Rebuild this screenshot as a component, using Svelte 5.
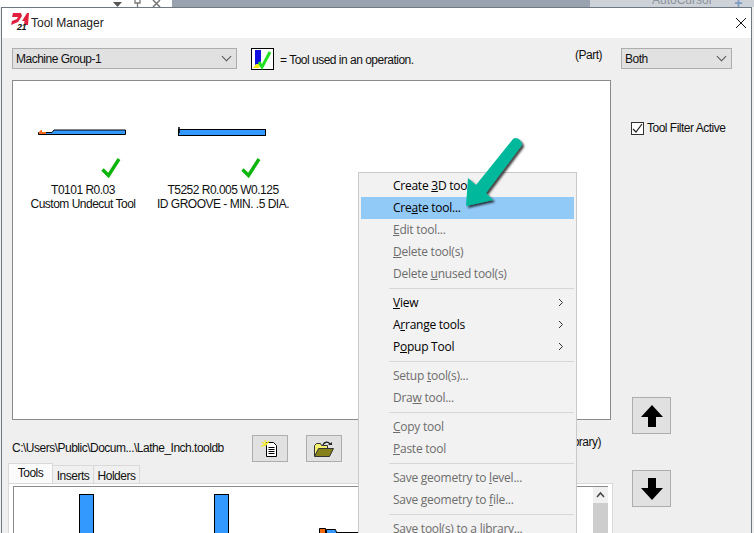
<script>
	const usedTools = [
		{ id: 'T0101 R0.03', name: 'Custom Undecut Tool', kind: 'undercut' },
		{ id: 'T5252 R0.005 W0.125', name: 'ID GROOVE - MIN. .5 DIA.', kind: 'groove' }
	];

	const menu = [
		[
			{ before: 'Create ', key: '3', after: 'D tool...', on: true },
			{ before: 'Cre', key: 'a', after: 'te tool...', on: true, hot: true },
			{ before: '', key: 'E', after: 'dit tool...' },
			{ before: '', key: 'D', after: 'elete tool(s)' },
			{ before: 'Delete ', key: 'u', after: 'nused tool(s)' }
		],
		[
			{ before: '', key: 'V', after: 'iew', on: true, sub: true },
			{ before: 'A', key: 'r', after: 'range tools', on: true, sub: true },
			{ before: 'P', key: 'o', after: 'pup Tool', on: true, sub: true }
		],
		[
			{ before: 'Setup ', key: 't', after: 'ool(s)...' },
			{ before: 'Dra', key: 'w', after: ' tool...' }
		],
		[
			{ before: '', key: 'C', after: 'opy tool' },
			{ before: '', key: 'P', after: 'aste tool' }
		],
		[
			{ before: 'Save geometry to ', key: 'l', after: 'evel...' },
			{ before: 'Save geometry to ', key: 'f', after: 'ile...' }
		],
		[{ before: 'Save tool(s) to a library...', key: '', after: '' }]
	];
</script>

<div class="screen">
	<div class="backdrop">
		<div class="desk">
			<svg class="desk-icons" width="48" height="7" viewBox="0 0 48 7">
				<path d="M0 2h9L4.500 7z" fill="#555" />
				<path d="M22 0v3h5V0M24.500 3v4" fill="none" stroke="#777" stroke-width="1.300" />
				<path d="M40 0l7 7M47 0l-7 7" stroke="#777" stroke-width="1.500" />
			</svg>
		</div>
		<div class="app-dark"></div>
		<div class="app-light">
			<span class="cursor-name">AutoCursor</span>
			<span class="plus">+</span>
		</div>
	</div>

	<div class="window">
		<header class="title">
			<svg class="logo" width="18" height="20" viewBox="0 0 18 20">
				<path d="M2 0h8l1 3-4 6-7 3 1-4 5-2 1-2H1zM11 8l5-8h2l-1 12h-4l.5-4z" fill="#e0203c" />
			</svg>
			<span class="logo-num">21</span>
			<span>Tool Manager</span>
			<svg class="close" width="12" height="12" viewBox="0 0 12 12">
				<path d="M1 1l10 10M11 1L1 11" stroke="#111" stroke-width="1" />
			</svg>
		</header>

		<div class="body">
			<div class="main">
				<div class="toolbar">
					<div class="select group"><span>Machine Group-1</span><i class="chev"></i></div>
					<svg class="legend" width="23" height="22" viewBox="0 0 23 22">
						<rect x=".5" y=".5" width="22" height="21" fill="#fff" stroke="#000" />
						<rect x="4" y="2" width="6" height="15" fill="#1010e0" />
						<path d="M2 20l3-4h5l-2 4z" fill="#f4e820" />
						<path d="M8 14l3 5 8-15" fill="none" stroke="#22e022" stroke-width="3" />
					</svg>
					<span class="legend-text">= Tool used in an operation.</span>
					<span class="part">(Part)</span>
				</div>

				<div class="tool-list">
					{#each usedTools as tool}
						<div class="tool">
							<svg class="shape" width="88" height="9" viewBox="0 0 88 9">
								{#if tool.kind === 'undercut'}
									<path d="M.5 7.5V5.5H14L16 3H87.5V7.5z" fill="#3399ff" stroke="#000" />
									<path d="M1 7V5L3 3h1v2h4v2z" fill="#f06a20" />
								{:else}
									<rect x=".5" y="2.5" width="87" height="6" fill="#3399ff" stroke="#000" />
									<path d="M1 0v6" stroke="#000" stroke-width="1.5" />
								{/if}
							</svg>
							<svg class="check" width="20" height="22" viewBox="0 0 20 22">
								<path d="M1.500 12.500l6 6L18 2" fill="none" stroke="#0cb40c" stroke-width="3.400" />
							</svg>
							<div class="tool-id">{tool.id}</div>
							<div>{tool.name}</div>
						</div>
					{/each}
				</div>

				<div class="path-row">
					<span class="path">C:\Users\Public\Docum...\Lathe_Inch.tooldb</span>
					<button class="btn">
						<svg width="18" height="18" viewBox="0 0 18 18">
							<path d="M5.500 2.500h7l3 3v11h-10z" fill="#fff" stroke="#000" />
							<path d="M7.500 7.500h6M7.500 9.500h6M7.500 11.500h6M7.500 13.500h6" stroke="#000" />
							<path d="M1 2l4 3M4 0l1 5M0 6l5-1M8 1L5 5" stroke="#f2ea30" stroke-width="1.300" />
						</svg>
					</button>
					<button class="btn">
						<svg width="20" height="16" viewBox="0 0 20 16">
							<path d="M.500 15V4.500l2-2h4l1 2h6V8" fill="#f4f070" stroke="#333" />
							<path d="M.500 15.500l4-8h15l-4 8z" fill="#85801a" stroke="#333" />
							<path d="M9 4c1-3 5-4 7-1" fill="none" stroke="#222" stroke-width="1.300" />
							<path d="M14 4h4V1z" fill="#222" />
						</svg>
					</button>
					<span class="library">(Library)</span>
				</div>

				<div class="tabs">
					<span class="tab active">Tools</span>
					<span class="tab inserts">Inserts</span>
					<span class="tab holders">Holders</span>
				</div>
				<div class="tab-page">
					<div class="tool-strip">
						<div class="stock"><i class="bar"></i></div>
						<div class="stock"><i class="bar"></i></div>
						<div class="stock">
							<svg class="stub" width="45" height="6" viewBox="0 0 45 6">
								<path d="M.500 6V.500h6V6z" fill="#f06a10" stroke="#000" />
								<path d="M7.500 6V1.500h9l1 3H39V6" fill="#3399ff" stroke="#000" />
								<path d="M17 4.500h28" stroke="#000" />
							</svg>
						</div>
					</div>
					<div class="scrollbar">
						<svg width="15" height="16" viewBox="0 0 15 16">
							<path d="M4 10l3.500-4 3.500 4" fill="none" stroke="#444" stroke-width="1.500" />
						</svg>
						<div class="thumb"></div>
					</div>
				</div>
			</div>

			<aside class="side">
				<div class="select both"><span>Both</span><i class="chev"></i></div>
				<label class="filter">
					<span class="box">
						<svg width="11" height="11" viewBox="0 0 11 11">
							<path d="M1 6l3 3 6-8" fill="none" stroke="#222" stroke-width="1.200" />
						</svg>
					</span>
					Tool Filter Active
				</label>
				<button class="arrow up">
					<svg width="24" height="22" viewBox="0 0 24 22">
						<path d="M12 0l11 12h-7v10H8V12H1z" fill="#000" />
					</svg>
				</button>
				<button class="arrow down">
					<svg width="24" height="22" viewBox="0 0 24 22">
						<path d="M12 22L1 10h7V0h8v10h7z" fill="#000" />
					</svg>
				</button>
			</aside>
		</div>
	</div>

	<nav class="menu">
		{#each menu as group, i}
			{#if i > 0}<div class="sep"></div>{/if}
			{#each group as item}
				<div class="item" class:on={item.on} class:hot={item.hot}>
					<span>{item.before}<u>{item.key}</u>{item.after}</span>
					{#if item.sub}
						<svg width="6" height="9" viewBox="0 0 6 9">
							<path d="M1 1l3.500 3.500L1 8" fill="none" stroke="#333" />
						</svg>
					{/if}
				</div>
			{/each}
		{/each}
	</nav>

	<svg class="pointer" width="80" height="80" viewBox="0 0 80 80">
		<defs>
			<filter id="drop" x="-20%" y="-20%" width="150%" height="150%">
				<feDropShadow dx="2" dy="2" stdDeviation="1.200" flood-color="#000" flood-opacity=".75" />
			</filter>
		</defs>
		<path
			d="M51 5c3-3 9 1 9 6L24 59l7 7-27 6 2-28 8 7z"
			fill="#00b89c"
			filter="url(#drop)"
		/>
	</svg>
</div>

<style>
	:global(body) {
		margin: 0;
		background: #fff;
	}

	.screen {
		position: relative;
		width: 754px;
		height: 533px;
		overflow: hidden;
		font-family: 'Liberation Sans', Arial, sans-serif;
		font-size: 12px;
		letter-spacing: -0.5px;
		color: #111;
		background: #efefef;
	}

	.backdrop {
		display: flex;
		height: 7px;
		overflow: hidden;
	}

	.desk {
		width: 172px;
		background: #fff;
		padding-left: 113px;
		box-sizing: border-box;
	}

	.desk-icons {
		display: block;
	}

	.app-dark {
		width: 418px;
		background: #98a3af;
	}

	.app-light {
		flex: 1;
		display: flex;
		justify-content: space-between;
		background: #cdd2d8;
		padding: 0 12px 0 62px;
	}

	.cursor-name {
		display: block;
		margin-top: -7px;
		color: #8c949c;
		line-height: 14px;
		letter-spacing: 0;
	}

	.plus {
		display: block;
		margin-top: -4px;
		color: #7d9cc0;
		font-size: 14px;
		font-weight: 700;
		line-height: 14px;
	}

	.window {
		margin-left: 1px;
		width: 751px;
		height: 526px;
		border: 1px solid #6f7780;
		border-bottom: 0;
		box-sizing: border-box;
		background: #efefef;
	}

	.title {
		position: relative;
		display: flex;
		align-items: center;
		height: 30px;
		padding-left: 9px;
		background: #fff;
		letter-spacing: 0;
		color: #222;
	}

	.logo {
		margin-right: 2px;
	}

	.logo-num {
		position: absolute;
		left: 15px;
		top: 15px;
		font-size: 9px;
		line-height: 9px;
		font-weight: 700;
		font-style: italic;
		letter-spacing: -0.5px;
		color: #111;
	}

	.close {
		margin: -1px 4px 0 auto;
	}

	.body {
		display: flex;
		padding: 10px 0 0 10px;
	}

	.main {
		width: 599px;
		flex: none;
		display: flex;
		flex-direction: column;
	}

	.toolbar {
		display: flex;
		align-items: center;
		height: 21px;
	}

	.select {
		display: flex;
		align-items: center;
		justify-content: space-between;
		height: 21px;
		padding: 0 6px 0 3px;
		box-sizing: border-box;
		background: #e1e1e1;
		border: 1px solid #adadad;
	}

	.group {
		width: 225px;
	}

	.chev {
		width: 6px;
		height: 6px;
		margin-top: -4px;
		border-right: 1px solid #555;
		border-bottom: 1px solid #555;
		transform: rotate(45deg);
	}

	.legend {
		margin-left: 14px;
	}

	.legend-text {
		margin-left: 6px;
		margin-top: 2px;
	}

	.part {
		margin: -8px 9px 0 auto;
	}

	.tool-list {
		display: flex;
		align-items: flex-start;
		height: 338px;
		margin-top: 11px;
		background: #fff;
		border: 1px solid #8a8a8a;
	}

	.tool {
		display: flex;
		flex-direction: column;
		align-items: center;
		width: 140px;
		padding-top: 46px;
		line-height: 14px;
		text-align: center;
		white-space: nowrap;
	}

	.shape {
		display: block;
		margin-left: -3px;
	}

	.check {
		display: block;
		margin: 21px 0 0 56px;
	}

	.tool-id {
		margin-top: 4px;
	}

	.path-row {
		display: flex;
		align-items: center;
		height: 27px;
		margin-top: 15px;
	}

	.path {
		width: 240px;
		margin-top: -2px;
	}

	.btn {
		display: flex;
		align-items: center;
		justify-content: center;
		width: 36px;
		height: 27px;
		padding: 0;
		background: #e1e1e1;
		border: 1px solid #adadad;
	}

	.btn + .btn {
		margin-left: 18px;
	}

	.library {
		margin: -14px 10px 0 auto;
	}

	.tabs {
		display: flex;
		align-items: flex-end;
		height: 20px;
		margin: 1px 0 0 -4px;
	}

	.tab {
		height: 18px;
		line-height: 20px;
		text-align: center;
		background: #f0f0f0;
		border: 1px solid #d9d9d9;
		border-bottom: 0;
		border-left: 0;
		box-sizing: border-box;
	}

	.tab.active {
		width: 45px;
		height: 20px;
		background: #fbfbfb;
		border-left: 1px solid #d9d9d9;
		line-height: 18px;
	}

	.inserts {
		width: 41px;
	}

	.holders {
		width: 46px;
	}

	.tab-page {
		display: flex;
		margin-left: -4px;
		margin-right: -2px;
		padding: 2px 2px 0 4px;
		height: 60px;
		border: 1px solid #d9d9d9;
		border-bottom: 0;
		box-sizing: border-box;
		background: #fff;
	}

	.tool-strip {
		flex: 1;
		display: flex;
		padding-left: 5px;
		background: #fff;
		border: 1px solid #8a8a8a;
		border-right: 0;
		border-bottom: 0;
		overflow: hidden;
		min-width: 0;
	}

	.stock {
		flex: none;
		width: 135px;
		display: flex;
		justify-content: center;
	}

	.bar {
		display: block;
		width: 15px;
		height: 50px;
		margin-top: 7px;
		box-sizing: border-box;
		background: #3399ff;
		border: 1px solid #000;
		border-bottom: 0;
	}

	.stub {
		margin: 41px 0 0 -30px;
		flex: none;
	}

	.scrollbar {
		width: 15px;
		flex: none;
		margin-right: 2px;
		background: #f0f0f0;
		border-top: 1px solid #8a8a8a;
	}

	.scrollbar svg {
		display: block;
	}

	.thumb {
		height: 40px;
		background: #cdcdcd;
	}

	.side {
		display: flex;
		flex-direction: column;
		padding-left: 10px;
	}

	.both {
		width: 111px;
	}

	.filter {
		display: flex;
		align-items: center;
		gap: 3px;
		margin-top: 52px;
		padding-left: 10px;
	}

	.box {
		display: flex;
		align-items: center;
		justify-content: center;
		width: 13px;
		height: 13px;
		box-sizing: border-box;
		background: #fff;
		border: 1px solid #333;
	}

	.arrow {
		display: flex;
		align-items: center;
		justify-content: center;
		width: 39px;
		height: 37px;
		padding: 0;
		margin-left: 11px;
		background: #e1e1e1;
		border: 1px solid #adadad;
	}

	.up {
		margin-top: 262px;
	}

	.down {
		margin-top: 36px;
	}

	.menu {
		position: absolute;
		left: 358px;
		top: 172px;
		width: 219px;
		padding: 2px;
		box-sizing: border-box;
		background: #f2f2f2;
		border: 1px solid #c9c9c9;
		font-family: 'Open Sans', 'Noto Sans', sans-serif;
		letter-spacing: -0.25px;
		color: #6d6d6d;
	}

	.item {
		display: flex;
		align-items: center;
		justify-content: space-between;
		height: 22px;
		padding: 0 10px 2px 32px;
		box-sizing: border-box;
	}

	.item.on {
		color: #000;
	}

	.item.hot {
		background: #91c9f7;
	}

	.sep {
		height: 1px;
		margin: 3px 0 3px 28px;
		background: #d7d7d7;
	}

	.pointer {
		position: absolute;
		left: 462px;
		top: 134px;
	}
</style>
